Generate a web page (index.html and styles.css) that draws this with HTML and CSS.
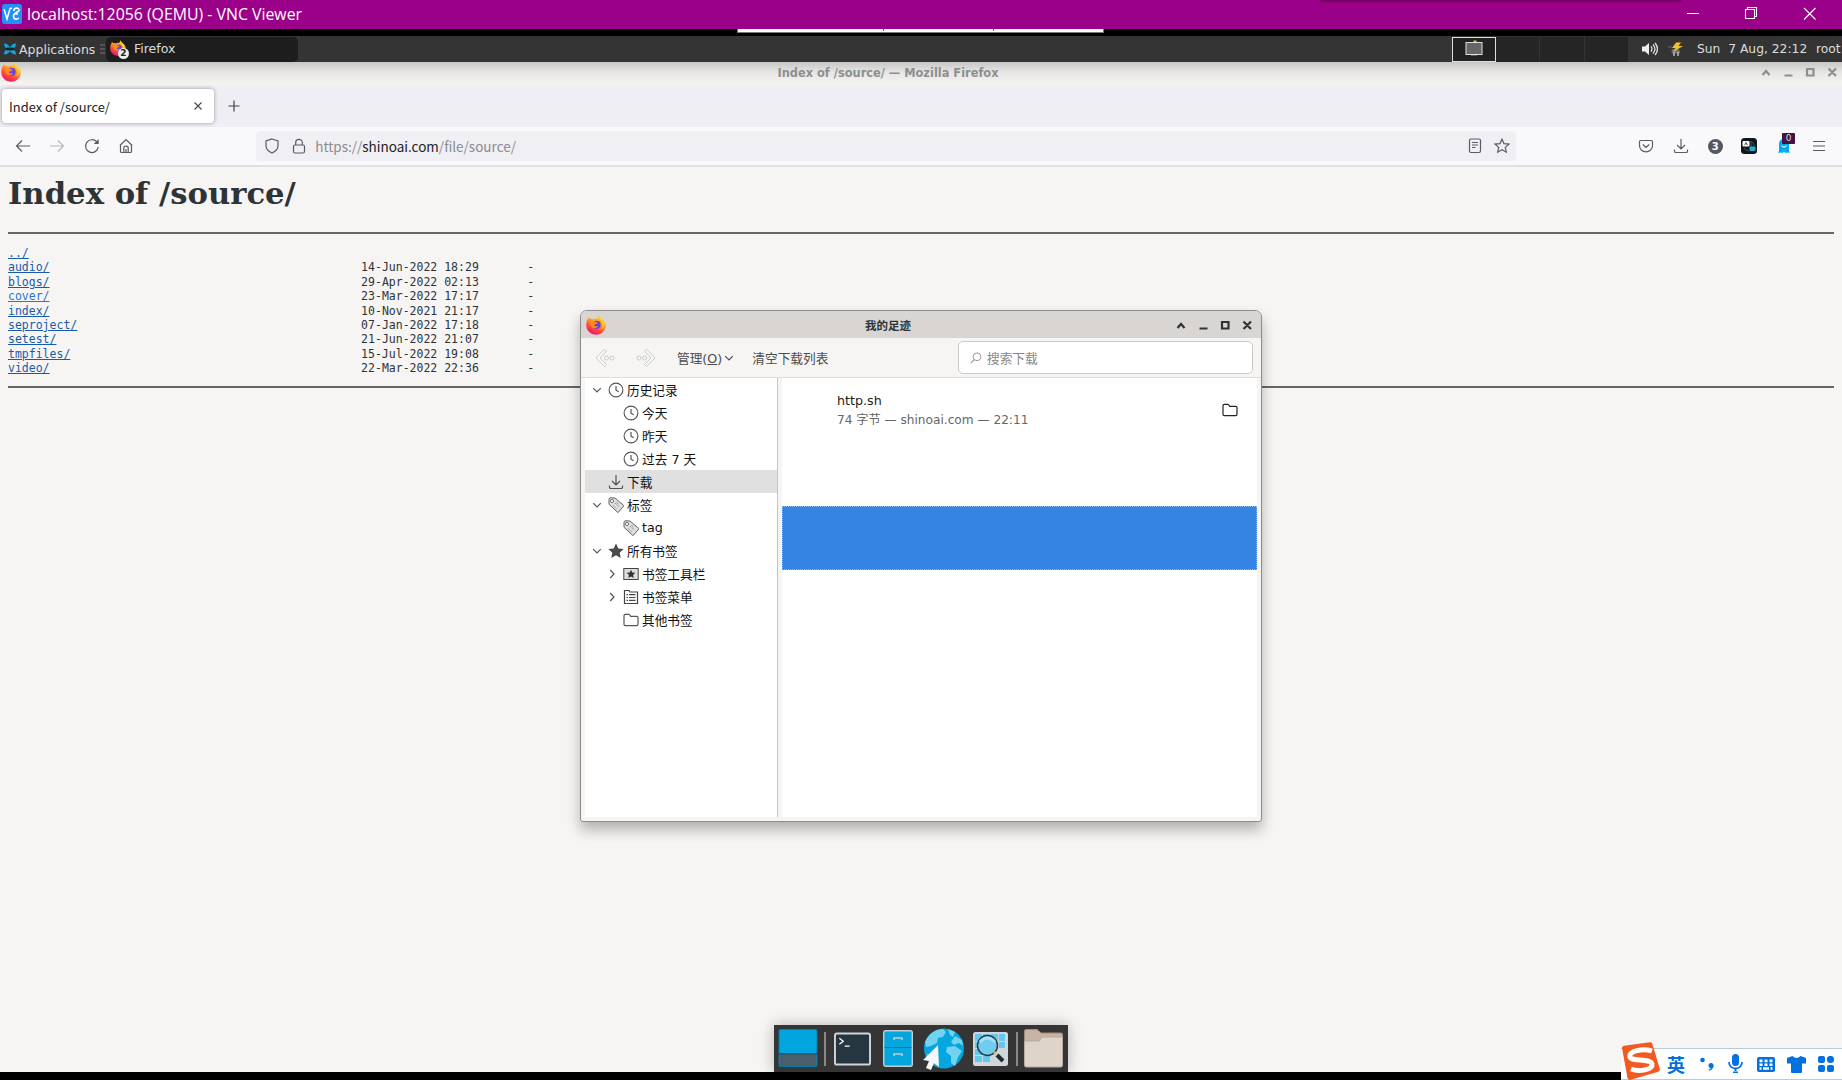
FILE: index.html
```html
<!DOCTYPE html>
<html lang="zh-CN">
<head>
<meta charset="utf-8">
<title>localhost:12056 (QEMU) - VNC Viewer</title>
<link rel="stylesheet" href="styles.css">
</head>
<body>
<svg class="defs" width="0" height="0">
  <defs>
    <linearGradient id="fx-body" x1=".8" y1="0" x2=".3" y2="1"><stop offset="0" stop-color="#ffe226"/><stop offset=".4" stop-color="#ff9a20"/><stop offset=".7" stop-color="#ff4a3c"/><stop offset="1" stop-color="#e80f78"/></linearGradient>
    <symbol id="firefox" viewBox="0 0 20 20">
      <path fill="url(#fx-body)" d="M13 .3c1 1.400 1.500 2.600 3.300 4.200C18.700 6.600 19.800 8.700 19.700 11 19.500 16 15.400 19.800 10.200 19.800 4.800 19.800.4 15.800.3 10.600.2 8.100.7 5.900 1.800 4.100c.2-.8.7-1.400 1.300-1.800 0 .8.200 1.300.5 1.700 1-.3 2.300-.2 3.300.4 1-.7 2.200-1 3.500-.8 1.300.1 2.200-.9 2.600-3.300z"/>
      <circle cx="10.600" cy="9.800" r="4.100" fill="#6c42d8"/>
      <path fill="#ff8a1e" d="M4.200 6.300c1.600-1 3.600-.7 5 .4.900.7 2 .5 2.600 1-.6 1.300-2.700 1.300-3.400 2.300-.4.8.2 1.400 1 1.500 1.100.1 1.700-.7 2.700-.4-.6 1.400-2 2.300-3.800 2.200C5.300 13 3.500 9.300 4.200 6.300z"/>
      <path fill="#ffd42a" opacity=".9" d="M12.800 1.600c.2 3 3.900 4.400 3.900 8.400 0 2-.9 3.600-2 4.600 4.300-1.400 5-7 2.300-9.600-1.500-1.400-2.800-2-4.200-3.400z"/>
    </symbol>
    <symbol id="clock" viewBox="0 0 16 16"><circle cx="8" cy="8" r="6.900" fill="none" stroke="currentColor" stroke-width="1.100"/><path d="M8 4v4.200l2.700 1.600" fill="none" stroke="currentColor" stroke-width="1.200"/></symbol>
    <symbol id="download" viewBox="0 0 16 16"><path d="M8 1v9.500M4 7l4 4 4-4M1.500 11.500v1.700c0 .8.500 1.300 1.300 1.300h10.400c.8 0 1.300-.5 1.300-1.300v-1.700" fill="none" stroke="currentColor" stroke-width="1.200"/></symbol>
    <symbol id="tag" viewBox="0 0 16 16"><path d="M1 2l1-1.300L7 1l8.500 7.300c.3.300.3.700 0 1l-5 5.900c-.3.300-.7.300-1 0L1 7.300z" fill="#dedede" stroke="currentColor" stroke-width=".9"/><circle cx="4" cy="4" r="1.600" fill="#fff" stroke="currentColor" stroke-width=".8"/><path d="M5 8.500l3.500 3M7 6l4.500 4M8.500 5.500l2.500 2" stroke="#888" stroke-width=".9" stroke-dasharray="2 1"/></symbol>
    <symbol id="folder" viewBox="0 0 16 16"><path d="M1 12.300V3.700c0-.8.500-1.300 1.300-1.300h3.400c.5 0 .8.200 1.100.6l.9 1.300h6c.8 0 1.300.5 1.300 1.300v6.700c0 .8-.5 1.300-1.300 1.300H2.300C1.500 13.600 1 13.100 1 12.300z" fill="none" stroke="currentColor" stroke-width="1.200"/></symbol>
    <symbol id="down" viewBox="0 0 10 10"><path d="M1.200 3.200L5 7l3.800-3.800" fill="none" stroke="currentColor" stroke-width="1.200"/></symbol>
    <symbol id="right" viewBox="0 0 10 10"><path d="M3.200 1L7 5 3.200 9" fill="none" stroke="currentColor" stroke-width="1.200"/></symbol>
    <symbol id="wm" viewBox="0 0 76 12"><g fill="none" stroke="currentColor" stroke-width="2.200"><path d="M1.500 9L5 5l3.500 4M23.500 9.500h8M46 3h6.500v6.500H46zM67.500 2.500l7.500 7.500M75 2.500L67.500 10"/></g></symbol>
  </defs>
</svg>
<div class="screen">
  <header class="vnc">
    <svg class="vnc-logo" viewBox="0 0 20 20"><rect width="20" height="20" rx="2.500" fill="#2490fb"/><path d="M2 5l3 10 3-10.500L10 4" fill="none" stroke="#fff" stroke-width="1.500"/><path d="M11.500 7c1-4 6-3.500 5.500-.5-.4 2-5 1.800-5.500 5-.3 4 3 4.500 5.500 2.500M12 10h4" fill="none" stroke="#fff" stroke-width="1.600"/></svg>
    <h1 class="vnc-title">localhost:12056 (QEMU) - VNC Viewer</h1>
    <svg class="vnc-buttons" viewBox="0 0 130 14"><g fill="none" stroke="#fff" stroke-width="1.100"><path d="M0 6.500h12M60.500 2.500v-2h9v9h-2M58.500 2.500h9v9h-9zM117 1l11.500 11.500M128.500 1L117 12.500"/></g></svg>
    <i class="vnc-shade"></i>
  </header>
  <div class="gap"><div class="vnc-toolbar"><i></i><i></i></div></div>

  <nav class="panel">
    <svg class="app-icon" viewBox="0 0 14 14"><path d="M1 1.500l3 .5 3 3 3-3 3-.5-.5 3L10 7l2.500 2.500.5 3-3-.5-3-2.500L4 12l-3 .5.500-3L4 7 1.500 4.500z" fill="#12a5dd"/><path d="M4 5.500h6l1.500 1.500L10 8.500H4L2.500 7z" fill="#17252c"/></svg>
    <span class="apps">Applications</span>
    <svg class="grip" viewBox="0 0 5 10"><path d="M0 1h5M0 5h5M0 9h5" stroke="#777"/></svg>
    <div class="task"><svg class="fx-small"><use href="#firefox"/></svg><b class="count">2</b><span>Firefox</span></div>
    <div class="pager"><i class="current"><svg viewBox="0 0 18 16"><path d="M8.500 0.500h3V3h-3z" fill="#e8c82c"/><path d="M6 14h6v2H6z" fill="#d91a68"/><rect x="1" y="2.500" width="16" height="12" fill="#666" stroke="#ddd"/></svg></i><i></i><i></i><i></i></div>
    <svg class="volume" viewBox="0 0 16 14"><path d="M0 4.500h3L7 1v12L3 9.500H0z" fill="#eee"/><path d="M9 4.500q2 2.500 0 5M11 2.500q4 4.500 0 9M13 1q5 6 0 12" fill="none" stroke="#ddd" stroke-width="1.300"/></svg>
    <svg class="power" viewBox="0 0 15 15"><path d="M0 5h4M4 8l3-1 4 1 1 3H4z" stroke="#667" fill="#777"/><path d="M6 10v4M10 10v4" stroke="#bbb" stroke-width="1.500"/><path d="M8 .5h5L10.500 4H15L5 10l2.500-4H4z" fill="#edc22e"/></svg>
    <span class="clock">Sun&nbsp; 7 Aug, 22:12</span><span class="user">root</span>
  </nav>

  <div class="fx-title"><svg class="fx-logo"><use href="#firefox"/></svg><span>Index of /source/ — Mozilla Firefox</span><svg class="wm"><use href="#wm"/></svg></div>
  <div class="tabs">
    <div class="tab"><span>Index of /source/</span><svg viewBox="0 0 10 10"><path d="M1.500 1.500l7 7M8.500 1.500l-7 7" stroke="#444" stroke-width="1.100"/></svg></div>
    <svg class="plus" viewBox="0 0 12 12"><path d="M6 .5v11M.5 6h11" stroke="#444" stroke-width="1.200"/></svg>
  </div>
  <div class="navbar">
    <svg class="ic" viewBox="0 0 16 16"><path d="M15 8H1.500M7 2.500L1.500 8 7 13.500" /></svg>
    <svg class="ic faded" viewBox="0 0 16 16"><path d="M1 8h13.500M9 2.500L14.500 8 9 13.500"/></svg>
    <svg class="ic" viewBox="0 0 16 16"><path d="M14.300 9A6.400 6.400 0 1 1 12.600 3.700L14 5"/><path d="M14.700 1v5H9.700z" fill="#5b5b66" stroke="none"/></svg>
    <svg class="ic" viewBox="0 0 16 16"><path d="M1.800 7.500L8 1.500l6.200 6M2.500 7v6.200c0 .8.500 1.300 1.300 1.300h8.400c.8 0 1.300-.5 1.300-1.300V7M5.800 14.500V10c0-2.500 4.400-2.500 4.400 0v4.500M8 11v3.500"/></svg>
    <div class="url">
      <svg class="ic" viewBox="0 0 16 16"><path d="M8 1l6 2v4.500c0 3.800-2.500 6-6 7.500-3.500-1.500-6-3.700-6-7.500V3z"/></svg>
      <svg class="ic lock" viewBox="0 0 16 16"><rect x="2.500" y="7" width="11" height="8" rx="1.500"/><path d="M4.700 7V4.500c0-4.200 6.600-4.200 6.600 0V7"/></svg>
      <span class="address">https://<b>shinoai.com</b>/file/source/</span>
      <svg class="ic reader" viewBox="0 0 16 16"><rect x="2.500" y="1" width="11" height="13.500" rx="1.500"/><path d="M5 4.500h6M5 7h6M5 9.500h3.500"/></svg>
      <svg class="ic star" viewBox="0 0 16 16"><path d="M8 1.200l2 4.400 4.900.5-3.600 3.300 1 4.800L8 11.800l-4.300 2.400 1-4.800L1.100 6.100 6 5.600z"/></svg>
    </div>
    <div class="addons">
      <svg class="ic" viewBox="0 0 16 16"><path d="M1.500 3.700c0-.8.500-1.200 1.200-1.200h10.600c.7 0 1.200.4 1.200 1.200v3.800c0 8.500-13 8.500-13 0zM4.800 6.500L8 9.500l3.200-3"/></svg>
      <svg class="ic"><use href="#download"/></svg>
      <b class="three">3</b>
      <svg class="trans" viewBox="0 0 16 16"><rect width="16" height="16" rx="3.500" fill="#11171b"/><path d="M9 3.500a4.500 4.500 0 0 1 4 4.500M3 9.500a5 5 0 0 0 5 3.500M10 3v6" fill="none" stroke="#3b555d"/><rect x="1.500" y="3" width="7" height="5.500" rx="1" fill="#fff"/><path d="M3.700 7.300L5 4.300l1.300 3" fill="none" stroke="#333" stroke-width=".8"/><rect x="8.500" y="8.500" width="6" height="4.500" rx="1" fill="#29acc9"/></svg>
      <div class="ghost"><svg viewBox="0 0 12 15"><path d="M1 13V6C1-1 11-1 11 6v7l1 1.700-2.500-.2L8 15l-2-1-2 1-1.500-.5L0 15z" fill="#00aef0"/><path d="M3.500 8q2.500 2.500 5 0" fill="none" stroke="#fff"/></svg><b>0</b></div>
      <svg class="ic" viewBox="0 0 16 16"><path d="M2 3.500h12M2 8h12M2 12.500h12"/></svg>
    </div>
  </div>

  <main class="page">
    <h2>Index of /source/</h2>
    <hr>
<pre><a>../</a>
<a>audio/</a>                                             14-Jun-2022 18:29       -
<a>blogs/</a>                                             29-Apr-2022 02:13       -
<a class="hot">cover/</a>                                             23-Mar-2022 17:17       -
<a>index/</a>                                             10-Nov-2021 21:17       -
<a>seproject/</a>                                         07-Jan-2022 17:18       -
<a>setest/</a>                                            21-Jun-2022 21:07       -
<a>tmpfiles/</a>                                          15-Jul-2022 19:08       -
<a>video/</a>                                             22-Mar-2022 22:36       -
</pre>
    <hr>
  </main>
</div>

<section class="dialog">
  <header class="dlg-title"><svg class="fx-logo"><use href="#firefox"/></svg><span>我的足迹</span><svg class="wm"><use href="#wm"/></svg></header>
  <div class="dlg-tools">
    <svg class="hist" viewBox="0 0 20 20"><path d="M9.500 1L1 10l8.500 8.500 2-2L5 10l6.500-7z"/><circle cx="11.500" cy="10" r="2"/><circle cx="17" cy="10" r="2"/></svg>
    <svg class="hist flip" viewBox="0 0 20 20"><path d="M9.500 1L1 10l8.500 8.500 2-2L5 10l6.500-7z"/><circle cx="11.500" cy="10" r="2"/><circle cx="17" cy="10" r="2"/></svg>
    <span class="manage">管理(<u>O</u>)</span><svg class="arrow"><use href="#down"/></svg>
    <span class="clear">清空下载列表</span>
    <div class="search"><svg viewBox="0 0 12 12"><circle cx="7" cy="4.800" r="3.900" fill="none" stroke="#999"/><path d="M4.200 7.600L.8 11.200" stroke="#999" stroke-width="1.200"/></svg><span>搜索下载</span></div>
  </div>
  <div class="dlg-body">
    <ul class="tree">
      <li><svg class="tw"><use href="#down"/></svg><svg class="ti"><use href="#clock"/></svg>历史记录</li>
      <li class="sub"><i class="tw"></i><svg class="ti"><use href="#clock"/></svg>今天</li>
      <li class="sub"><i class="tw"></i><svg class="ti"><use href="#clock"/></svg>昨天</li>
      <li class="sub"><i class="tw"></i><svg class="ti"><use href="#clock"/></svg>过去 7 天</li>
      <li class="selected"><i class="tw"></i><svg class="ti"><use href="#download"/></svg>下载</li>
      <li><svg class="tw"><use href="#down"/></svg><svg class="ti"><use href="#tag"/></svg>标签</li>
      <li class="sub"><i class="tw"></i><svg class="ti"><use href="#tag"/></svg>tag</li>
      <li><svg class="tw"><use href="#down"/></svg><svg class="ti" viewBox="0 0 16 16"><path d="M8 .5l2.300 4.900 5.300.6-3.900 3.700 1 5.300L8 12.300 3.300 15l1-5.300L.4 6l5.300-.6z" fill="#4b4b4b"/></svg>所有书签</li>
      <li class="sub"><svg class="tw"><use href="#right"/></svg><svg class="ti" viewBox="0 0 16 16"><rect x=".8" y="2.500" width="14.400" height="11" fill="#ddd" stroke="#444"/><path d="M8 3.700l1.300 2.800 3 .3-2.200 2.100.6 3L8 10.400l-2.700 1.500.6-3-2.200-2.100 3-.3z" fill="#333"/></svg>书签工具栏</li>
      <li class="sub"><svg class="tw"><use href="#right"/></svg><svg class="ti" viewBox="0 0 16 16"><path d="M1.500 14.500v-13H6l1 1.500h7.500v11.500zM6 5.700h6.500M6 8.500h6.500M6 11.300h6.500M3.500 5.700H5M3.500 8.500H5M3.500 11.300H5" fill="none" stroke="#444" stroke-width="1.200"/></svg>书签菜单</li>
      <li class="sub"><i class="tw"></i><svg class="ti"><use href="#folder"/></svg>其他书签</li>
    </ul>
    <div class="files">
      <div class="file"><div class="info"><strong>http.sh</strong><small>74 字节 — shinoai.com — 22:11</small></div><svg class="open"><use href="#folder"/></svg></div>
      <div class="file selected"></div>
    </div>
  </div>
</section>

<div class="dock">
  <svg class="d1" viewBox="0 0 40 40"><rect x=".5" y=".5" width="39" height="38" rx="1.500" fill="#02a5de" stroke="#087aa3"/><path d="M1 26h38v12H1z" fill="#4a5f6c"/><path d="M0 25.500h40" stroke="#263944"/></svg>
  <i></i>
  <svg class="d2" viewBox="0 0 38 34"><rect x="1" y="1" width="36" height="32" rx="2" fill="#263640" stroke="#cdd4db" stroke-width="2"/><path d="M5.500 6l4 3-4 3M11 14h5" fill="none" stroke="#fff" stroke-width="1.300"/></svg>
  <svg class="d3" viewBox="0 0 30 37"><rect x=".7" y=".7" width="28.600" height="35.600" rx="2" fill="#05a6dd" stroke="#c6cdd3" stroke-width="1.400"/><path d="M1.500 17.500h27" stroke="#087ba5"/><path d="M11 10V8h8v2M11 26v-2h8v2" fill="none" stroke="#c5cbd0" stroke-width="1.500"/></svg>
  <svg class="d4" viewBox="0 0 42 42"><circle cx="21" cy="20.500" r="20" fill="#04a6df"/><path d="M2 14C6 5 13 1 20 1l3 3-3 5-5 1-1 5-6 3-5 1zM25 1l7 3-2 5-3-2zM32 8l7 4 1 6-4-3-5 2-3-3zM24 19l8-1 7 5-4 6-3 9-4-3 0-7-5-4zM3 26l8 2 4 4-2 5z" fill="#73d2f0"/><path d="M15 17L0 32l6 1-3 7 5 2 3-7 5 4z" fill="#f7f7f7"/></svg>
  <svg class="d5" viewBox="0 0 35 34"><rect width="35" height="34" rx="2.500" fill="#cfd6dc"/><path d="M2 2h7v7H2zM10 2h7v7h-7zM18 2h7v7h-7zM26 2h6v7h-6zM2 10h7v6H2zM26 10h6v6h-6zM2 17h7v6H2zM2 24h7v6H2zM10 24h7v6h-7z" fill="#61c9ee"/><circle cx="14.500" cy="13.500" r="10" fill="#70cdf0" stroke="#283b46" stroke-width="1.500"/><path d="M7 10q7-8 15 0" fill="none" stroke="#a4e3f7" stroke-width="3"/><path d="M21 20l2 2" stroke="#e0c040" stroke-width="2.500"/><path d="M24 23l6 6" stroke="#1f2c34" stroke-width="4"/></svg>
  <i></i>
  <svg class="d6" viewBox="0 0 39 39"><path d="M.5 36V2Q.5.500 2 .5h11L17 4h20q1.500 0 1.500 1.500V15H.5z" fill="#c8b4a5" stroke="#a08c7e"/><path d="M.5 36V12H15l3-4h20.500v28q0 2-1.500 2H2q-1.500 0-1.500-2z" fill="#dfd4ca" stroke="#b9a99c"/></svg>
</div>

<div class="ime">
  <svg class="sogou" viewBox="0 0 40 38"><path d="M1 6Q1 4 3 3.700L29 .3q2-.2 2.500 2L38.800 27q.5 2-1.500 2.800L9 38 Q7 38 6.500 36z" fill="#f25a22"/><path d="M31 9C22 6 7 9 9 15c2 5 20 1 22 7 1 6-13 8-21 5" fill="none" stroke="#fff" stroke-width="5"/></svg>
  <b>英</b>
  <svg class="punct" viewBox="0 0 14 14"><circle cx="2.500" cy="3" r="2.300"/><circle cx="11" cy="8.500" r="2.500"/><path d="M13.500 8.500q0 4-4.500 5.300l-.3-1Q11 12 11 10z"/></svg>
  <svg class="mic" viewBox="0 0 15 20"><rect x="4" width="7" height="12" rx="3.500"/><path d="M1 8c0 8.500 13 8.500 13 0" fill="none" stroke="#0071df" stroke-width="1.800"/><path d="M6.500 14h2v3h-2zM5 17.500h5V19H5z"/></svg>
  <svg class="kbd" viewBox="0 0 18 15"><rect width="18" height="15" rx="2"/><path d="M2.500 2.500h3v2.700h-3zM7.500 2.500h3v2.700h-3zM12.500 2.500h3v2.700h-3zM2.500 6.400h3V9h-3zM7.500 6.400h3V9h-3zM12.500 6.400h3V9h-3zM2.500 10.300h2v2.500h-2zM6 10.300h6v2.500H6zM13.500 10.300h2v2.500h-2z" fill="#fff"/></svg>
  <svg class="shirt" viewBox="0 0 19 17"><path d="M0 2L5.500 0q4 4 8 0L19 2v5.500h-4V16q0 1-1 1H5q-1 0-1-1V7.500H0z"/></svg>
  <svg class="grid" viewBox="0 0 16 16"><rect width="7" height="7" rx="2"/><circle cx="12.500" cy="3.500" r="3.600"/><rect y="9" width="7" height="7" rx="2"/><rect x="9" y="9" width="7" height="7" rx="2"/></svg>
</div>
</body>
</html>
```
FILE: styles.css
```css
* { box-sizing: border-box; }
body { margin: 0; width: 1842px; height: 1080px; overflow: hidden; background: #000; font-family: "DejaVu Sans", "Noto Sans CJK SC", sans-serif; font-size: 12.5px; color: #333; }
svg { display: block; flex: none; }
.defs { position: absolute; }
.screen { width: 1842px; height: 1080px; display: flex; flex-direction: column; }
.screen > * { flex: none; }

/* viewer title bar */
.vnc { position: relative; height: 29px; background: #9b0089; display: flex; align-items: center; padding-left: 2px; }
.vnc-logo { width: 20px; height: 20px; margin-top: -1px; }
.vnc-title { margin: -2px auto 0 5px; font: 400 15.850px "Open Sans", sans-serif; color: #fff; white-space: nowrap; }
.vnc-buttons { width: 130px; height: 14px; margin: -1px 25px 0 0; }
.vnc-shade { position: absolute; top: 0; left: 1320px; width: 362px; height: 3px; background: linear-gradient(#6d005f, #9b0089); }
.gap { height: 7px; display: flex; justify-content: center; }
.vnc-toolbar { width: 367px; height: 4px; margin-right: 1px; background: #fff; border: solid #777; border-width: 0 1px 1px; display: flex; }
.vnc-toolbar i { flex: none; width: 146px; height: 2px; border-right: 1px solid #666; }
.vnc-toolbar i:last-child { width: 110px; }

/* desktop panel */
.panel { height: 26px; background: #343434; display: flex; align-items: center; color: #ddd; white-space: nowrap; }
.app-icon { width: 14px; height: 14px; margin-left: 3px; }
.apps { width: 80px; margin-left: 2px; font-size: 12.500px; }
.grip { width: 5px; height: 10px; margin-left: 1px; }
.task { width: 192px; height: 25px; margin-left: 1px; background: #1d1d1d; border-radius: 5px; display: flex; align-items: center; padding-left: 4px; }
.task > span { margin-top: -1px; }
.fx-small { width: 16px; height: 16px; margin-top: -2px; }
.count { width: 11px; height: 11px; margin: 9px 5px 0 -8px; border-radius: 50%; background: #eee; color: #222; font-size: 9px; line-height: 11px; text-align: center; z-index: 1; }
.pager { display: flex; height: 25px; margin-left: auto; }
.pager i { width: 44.300px; background: #252525; border-right: 1px solid #343434; }
.pager .current { width: 44px; background: #222; border: 1px solid #ddd; padding: 2px 0 0 12px; }
.pager svg { width: 18px; height: 16px; }
.volume { width: 16px; height: 14px; margin-left: 13px; }
.power { width: 15px; height: 15px; margin-left: 10px; }
.clock { width: 109px; margin-left: 14px; font-size: 12.3px; }
.user { width: 26px; margin-left: 10px; font-size: 12.3px; }

/* browser chrome */
.fx-title { height: 23px; display: grid; grid-template-columns: 100px 1fr 100px; align-items: center; background: linear-gradient(#c6c6c5, #e7e6e4 45%, #f5f4f1); font-size: 11.400px; font-weight: bold; color: #8c8f8f; text-align: center; }
.fx-title .fx-logo { margin: -4px 0 0 1px; }
.fx-title span { margin-top: -2px; padding-right: 66px; }
.fx-logo { width: 20px; height: 20px; }
.wm { width: 76px; height: 12px; margin-top: -2px; }
.fx-title .wm { margin: -4px 0 0 19px; }
.tabs { height: 42px; background: #efeef4; display: flex; align-items: center; padding-left: 2px; font: 12.900px "Noto Sans CJK SC", sans-serif; }
.tab { width: 212px; height: 34px; background: #fff; border-radius: 4px; box-shadow: 0 0 4px #999; display: flex; align-items: center; justify-content: space-between; padding: 0 11px 0 7px; color: #222; }
.tab svg { width: 10px; height: 10px; }
.plus { width: 12px; height: 12px; margin-left: 14px; }
.navbar { height: 40px; background: #f9f9fc; border-bottom: 2px solid #e0e0e0; display: flex; align-items: center; padding-left: 15px; }
.ic { width: 16px; height: 16px; margin-right: 18.300px; fill: none; stroke: #5b5b66; color: #5b5b66; stroke-width: 1.200; }
.faded { opacity: .4; }
.url { width: 1260px; height: 30px; margin-left: 104px; background: #f0eff4; border-radius: 4px; display: flex; align-items: center; padding: 0 6px 0 8px; }
.url .ic { margin-right: 11px; }
.url .lock { margin-right: 8px; }
.address { margin-right: auto; font: 13.500px "Noto Sans CJK SC", sans-serif; color: #8b8b91; }
.address b { font-weight: 400; color: #222; }
.url .star { margin-right: 0; }
.addons { flex: 1; display: flex; justify-content: space-between; align-items: center; margin: 0 15px 0 122px; }
.addons .ic { margin: 0; }
.three { width: 15px; height: 15px; border-radius: 50%; background: #565861; color: #fff; font-size: 10px; line-height: 15px; text-align: center; }
.trans { width: 16px; height: 16px; }
.ghost { position: relative; width: 16px; height: 16px; }
.ghost svg { width: 12px; height: 15px; margin-left: 2px; }
.ghost b { position: absolute; left: 6px; top: -5px; width: 13px; height: 11px; border-radius: 1px; background: #431345; color: #ddd; font-size: 9px; font-weight: 400; line-height: 11px; text-align: center; }

/* directory listing */
.page { height: 905px; padding: 6px 8px; background: #f6f5f3; overflow: hidden; }
.page h2 { margin: 0; height: 59px; font: bold 30.700px/41px "DejaVu Serif", serif; color: #2e3436; }
.page hr { margin: 0; height: 2px; border: 0; background: #666; }
.page pre { margin: 12px 0 10px; font: 11.500px/14.400px "DejaVu Sans Mono", monospace; color: #2e3436; }
.page a { color: #1b5aaa; text-decoration: underline; }
.page .hot { color: #2a76d2; }

/* downloads window */
.dialog { position: absolute; left: 580px; top: 310px; width: 682px; height: 512px; border: 1px solid #8e8c8a; border-radius: 7px 7px 3px 3px; background: #f6f5f3; box-shadow: 0 8px 14px rgba(0,0,0,.28); display: flex; flex-direction: column; overflow: hidden; }
.dlg-title { height: 27px; background: #d9d5d2; display: flex; align-items: center; padding: 0 9px 0 5px; font-weight: bold; color: #2e3436; }
.dlg-title span { margin: 0 auto; padding-right: 6px; font-size: 11.500px; }
.dlg-title .wm { margin-top: 0; }
.dlg-tools { height: 40px; border-bottom: 1px solid #dedddb; display: flex; align-items: center; padding-left: 14px; color: #4a4d4e; font-size: 12.700px; }
.hist { width: 20px; height: 20px; fill: #f7f7f6; stroke: #ccc; }
.flip { transform: scaleX(-1); margin-left: 21px; }
.manage { margin-left: 21px; }
.arrow { width: 10px; height: 10px; margin-left: 2px; }
.clear { margin-left: 18px; }
.search { width: 295px; height: 33px; margin: 0 8px 0 auto; background: #fff; border: 1px solid #cdc8c3; border-radius: 5px; display: flex; align-items: center; padding-left: 11px; color: #888; }
.search svg { width: 12px; height: 12px; margin-right: 5px; }
.dlg-body { flex: 1; display: flex; padding: 0 4px; }
.tree { width: 193px; height: 439px; margin: 0; padding: 0; list-style: none; background: #fff; border-right: 1px solid #c4c4c4; color: #111; font-size: 12.700px; }
.tree li { height: 23.050px; display: flex; align-items: center; padding-left: 7px; }
.tree .sub { padding-left: 22px; }
.tree .selected { background: #e0e0e0; }
.tw { width: 10px; height: 10px; margin-right: 6px; color: #555; }
.ti { width: 16px; height: 16px; margin-right: 3px; color: #555; }
.files { flex: 1; height: 439px; margin-left: 4px; background: #fff; }
.file { height: 64px; display: flex; align-items: center; justify-content: space-between; padding: 0 19px 0 55px; }
.info { display: flex; flex-direction: column; gap: 5px; }
.info strong { font-size: 12.700px; font-weight: 400; line-height: 15px; color: #222; }
.info small { font-size: 12.150px; line-height: 15px; color: #666; }
.open { width: 16px; height: 16px; color: #222; }
.files .selected { height: 64px; margin-top: 64px; background: #3584e4; outline: 1px dotted #8db9e8; outline-offset: -1px; }

/* dock */
.dock { position: absolute; left: 774px; top: 1025px; width: 294px; height: 47px; background: #353535; box-shadow: 0 0 14px rgba(0,0,0,.25); clip-path: inset(-16px -16px 0); display: flex; align-items: center; padding-left: 4px; }
.dock i { width: 2px; height: 34px; background: #888; }
.d1 { width: 40px; height: 39px; margin-right: 6px; }
.d2 { width: 37px; height: 34px; margin-left: 8px; }
.d3 { width: 30px; height: 37px; margin-left: 12px; }
.d4 { width: 42px; height: 42px; margin-left: 10px; }
.d5 { width: 35px; height: 34px; margin: 0 8px 0 8px; }
.d6 { width: 39px; height: 39px; margin-left: 6px; }

/* input method bar */
.ime { position: absolute; left: 1621px; top: 1048px; width: 221px; height: 32px; background: #fff; border: solid #b8c8df; border-width: 1px 0; display: flex; align-items: center; color: #0071df; fill: #0071df; }
.sogou { width: 40px; height: 38px; margin: -7px 6px 0 0; }
.ime b { width: 18px; font: 700 18px/30px "Noto Sans CJK SC", sans-serif; }
.punct { width: 14px; height: 14px; margin-left: 15px; }
.mic { width: 15px; height: 20px; margin-left: 14px; }
.kbd { width: 18px; height: 15px; margin-left: 14px; }
.shirt { width: 19px; height: 17px; margin-left: 12px; }
.grid { width: 16px; height: 16px; margin-left: 12px; }
```
